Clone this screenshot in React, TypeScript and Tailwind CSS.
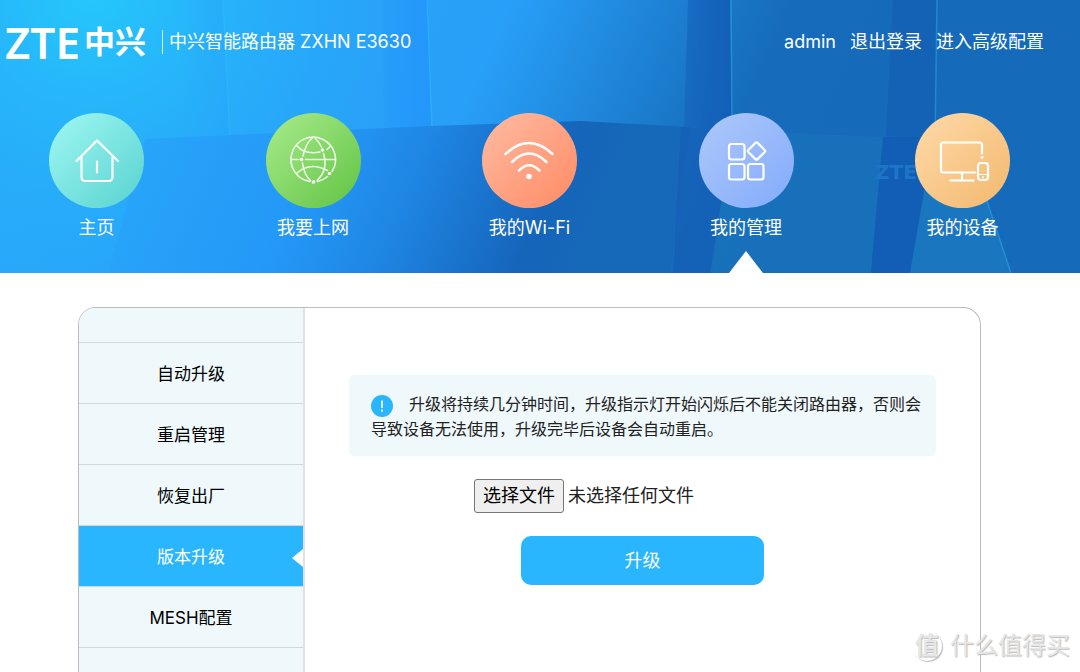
import React from 'react';

const HomeIcon = () => (
  <svg viewBox="0 0 95 95" className="size-full" fill="none" stroke="white" strokeWidth="2.200" strokeLinecap="round" strokeLinejoin="round">
    <path d="M27.500 48L48 27.500L69 48" />
    <path d="M32.500 44V64Q32.500 68 36.500 68H59.500Q63.500 68 63.500 64V44" />
    <path d="M48 48.500V59.500" />
  </svg>
);

const GlobeIcon = () => (
  <svg viewBox="0 0 95 95" className="size-full" fill="none" stroke="white" strokeOpacity="0.85" strokeWidth="1.600" strokeLinecap="round">
    <path d="M44 68.500A22.300 22.300 0 1 1 66 58.500" />
    <path d="M51.500 68.500A22.300 22.300 0 0 0 61.500 63.500" />
    <path d="M46.500 24.500Q39.500 31 37 43" />
    <path d="M36.500 50Q38 62 44.500 67.500" />
    <path d="M48.500 24.500Q53 28.500 55.500 34" />
    <path d="M57.500 40.500Q62.500 57 51 67.500" />
    <path d="M31 33Q39 42 54 39" />
    <path d="M61 36.500L64 33.500" />
    <path d="M31 60Q44 48.500 61.500 57.500" />
    <path d="M25.500 46.500H32.500M39.500 46.500H69.500" />
    <g fill="white" stroke="none">
      <circle cx="35.500" cy="46.500" r="1.800" />
      <circle cx="56.500" cy="37" r="1.800" />
      <circle cx="63.500" cy="60.500" r="1.800" />
      <circle cx="47.500" cy="69" r="1.800" />
    </g>
  </svg>
);

const WifiIcon = () => (
  <svg viewBox="0 0 95 95" className="size-full" fill="none" stroke="white" strokeWidth="2.500" strokeLinecap="round">
    <path d="M23.500 41Q47 19 70.500 41" />
    <path d="M30 49Q47 32 64.500 49" />
    <path d="M37 57.500Q47 47 57.500 57.500" />
    <circle cx="47" cy="63.500" r="2.800" fill="white" stroke="none" />
  </svg>
);

const ManageIcon = () => (
  <svg viewBox="0 0 95 95" className="size-full" fill="none" stroke="white" strokeWidth="2.200" strokeLinejoin="round">
    <rect x="30" y="31" width="15.500" height="15.500" rx="2.500" />
    <rect x="30" y="51" width="15.500" height="15.500" rx="2.500" />
    <rect x="49" y="51" width="15.500" height="15.500" rx="2.500" />
    <rect x="51" y="31.500" width="13" height="13" rx="1.500" transform="rotate(45 57.500 38)" />
  </svg>
);

const DeviceIcon = () => (
  <svg viewBox="0 0 95 95" className="size-full" fill="none" stroke="white" strokeWidth="2.200" strokeLinecap="round" strokeLinejoin="round">
    <path d="M67 40.500V32Q67 29.500 64.500 29.500H28.500Q26 29.500 26 32V57Q26 59.500 28.500 59.500H60" />
    <path d="M47 60V67M35.500 67.500H58.500" />
    <rect x="63" y="50" width="10" height="17" rx="3" />
    <path d="M63 61.500H73" strokeWidth="1.200" />
    <circle cx="68" cy="64.300" r="1" fill="white" stroke="none" />
    <circle cx="67" cy="44.500" r="1.400" fill="white" stroke="none" />
  </svg>
);

const NAV_ITEMS = [
  { label: '主页', icon: HomeIcon, color: 'from-[#9ff8f4] to-[#55d2cf]' },
  { label: '我要上网', icon: GlobeIcon, color: 'from-[#a8ec8b] to-[#60c341]' },
  { label: '我的Wi-Fi', icon: WifiIcon, color: 'from-[#fdbba3] to-[#ff8a63]' },
  { label: '我的管理', icon: ManageIcon, color: 'from-[#aec8fa] to-[#83abfb]', active: true },
  { label: '我的设备', icon: DeviceIcon, color: 'from-[#fedaa9] to-[#f3b86d]' },
];

const SIDE_ITEMS = [
  { label: '自动升级' },
  { label: '重启管理' },
  { label: '恢复出厂' },
  { label: '版本升级', active: true },
  { label: 'MESH配置' },
];

const HeaderBackdrop = () => (
  <svg viewBox="0 0 1080 273" preserveAspectRatio="none" className="absolute inset-0 size-full" aria-hidden="true">
    <defs>
      <linearGradient id="base" gradientUnits="userSpaceOnUse" x1="100" y1="0" x2="760" y2="300">
        <stop offset="0" stopColor="#28a9fa" />
        <stop offset="0.52" stopColor="#289ff8" />
        <stop offset="0.78" stopColor="#1a78c9" />
        <stop offset="0.88" stopColor="#166bba" />
        <stop offset="1" stopColor="#156aba" />
      </linearGradient>
      <radialGradient id="glow" gradientUnits="userSpaceOnUse" cx="90" cy="-10" r="320">
        <stop offset="0" stopColor="#25c8fc" />
        <stop offset="0.35" stopColor="#26bbfa" stopOpacity="0.75" />
        <stop offset="1" stopColor="#28a9fa" stopOpacity="0" />
      </radialGradient>
      <linearGradient id="lower" gradientUnits="userSpaceOnUse" x1="130" y1="120" x2="560" y2="310">
        <stop offset="0" stopColor="#28a6fa" />
        <stop offset="0.4" stopColor="#2498f7" />
        <stop offset="0.6" stopColor="#1f86e4" />
        <stop offset="0.88" stopColor="#1565ba" />
        <stop offset="1" stopColor="#1668b9" />
      </linearGradient>
      <linearGradient id="softFold" x1="0" x2="1" y1="0" y2="0">
        <stop offset="0" stopColor="#26a5fb" stopOpacity="0" />
        <stop offset="1" stopColor="#26a5fb" stopOpacity="0.5" />
      </linearGradient>
      <linearGradient id="fold" x1="0" x2="1" y1="0" y2="0">
        <stop offset="0" stopColor="#1f85fc" stopOpacity="0.1" />
        <stop offset="1" stopColor="#1f8dfc" stopOpacity="0.5" />
      </linearGradient>
      <linearGradient id="darkFold" x1="0" x2="1" y1="0" y2="0">
        <stop offset="0" stopColor="#135fb8" stopOpacity="0.5" />
        <stop offset="1" stopColor="#135fb8" />
      </linearGradient>
    </defs>
    <rect width="1080" height="273" fill="url(#base)" />
    <rect width="480" height="273" fill="url(#glow)" />
    <path d="M145 139L230 135L430 126L580 121L690 127L670 273H108Z" fill="url(#lower)" />
    <path d="M180 0H222L229 135H181Z" fill="url(#softFold)" />
    <path d="M383 0H427L431 126L383 129Z" fill="url(#fold)" />
    <path d="M688 0H730L732 130L684 127Z" fill="url(#darkFold)" />
    <path d="M681 127L732 130L712 273H673Z" fill="#145eb6" fillOpacity="0.7" />
    <path d="M732 130L883 137L871 273H710Z" fill="#1a74bd" fillOpacity="0.6" />
    <path d="M893 0H937L935 140L886 136Z" fill="#135fb5" fillOpacity="0.7" />
    <path d="M883 137H935L910 273H871Z" fill="#125bb4" fillOpacity="0.85" />
    <path d="M926 180L980 180L1011 273H910Z" fill="#1a76be" />
    <g fill="none" stroke="#2fc0f5" strokeOpacity="0.4" strokeWidth="1.500">
      <path d="M223 0L230 135" />
      <path d="M427 0L432 126" />
      <path d="M731 0L732 130" />
      <path d="M937 0L935 140" />
      <path d="M980 180L1011 273" />
    </g>
    <text x="875" y="179" className="font-['DejaVu_Sans'] text-[20px] font-bold" fill="#1c76c6">ZTE</text>
  </svg>
);

const Header = () => (
  <header className="relative h-[273px] shrink-0 bg-[#1a78c9] text-lg leading-6 text-white">
    <HeaderBackdrop />
    <div className="relative flex h-[81px] items-center justify-between pt-0.5 pr-9 pl-[5px]">
      <div className="flex items-center">
        <div className="flex w-[141px] items-center justify-between">
          <span className="font-['Noto_Sans'] text-[44px] leading-none font-semibold">ZTE</span>
          <span className="text-[31px] leading-none font-bold">中兴</span>
        </div>
        <h1 className="ml-4 border-l border-white/80 pl-1.5">中兴智能路由器 ZXHN E3630</h1>
      </div>
      <div className="flex gap-3.5">
        <span>admin</span>
        <a href="#logout">退出登录</a>
        <a href="#advanced">进入高级配置</a>
      </div>
    </div>
    <nav className="relative flex justify-between pt-8 pr-[70px] pl-[49px]">
      {NAV_ITEMS.map((item) => (
        <a key={item.label} href="#nav" className="relative flex h-40 w-[95px] flex-col items-center gap-2">
          <span className={`size-[95px] rounded-full bg-gradient-to-br ${item.color}`}>
            <item.icon />
          </span>
          <span className="whitespace-nowrap">{item.label}</span>
          {item.active && (
            <svg viewBox="0 0 34 22" className="absolute bottom-0 h-[22px] w-[34px]" fill="white">
              <path d="M17 0L34 22H0Z" />
            </svg>
          )}
        </a>
      ))}
    </nav>
  </header>
);

const Sidebar = () => (
  <aside className="w-[226px] shrink-0 rounded-tl-2xl border-r-2 border-[#dfe1e3] bg-[#eff8fb] pt-[34px]">
    {SIDE_ITEMS.map((item) => (
      <a
        key={item.label}
        href="#side"
        className={`relative flex h-[61px] items-center justify-center border-t border-[#d3d7d9] pt-1 text-[17px] ${item.active ? 'bg-[#2ab6fe] text-white' : 'text-black'}`}
      >
        {item.label}
        {item.active && (
          <svg viewBox="0 0 11 18" className="absolute right-0 h-[18px] w-[11px]" fill="white">
            <path d="M11 0V18L0 9Z" />
          </svg>
        )}
      </a>
    ))}
    <div className="border-t border-[#d3d7d9]" />
  </aside>
);

const UpgradePanel = () => (
  <main className="flex-1 px-11 pt-[67px] text-[#222]">
    <p className="rounded-md bg-[#eff8fb] pt-[17px] pr-2.5 pb-3.5 pl-[22px] text-base leading-[25px]">
      <svg viewBox="0 0 22 22" className="mr-4 inline-block size-[22px] align-middle">
        <circle cx="11" cy="11" r="11" fill="#2ab6fe" />
        <path d="M11 6V12.500M11 15V16.200" stroke="white" strokeWidth="1.600" strokeLinecap="round" />
      </svg>
      升级将持续几分钟时间，升级指示灯开始闪烁后不能关闭路由器，否则会导致设备无法使用，升级完毕后设备会自动重启。
    </p>
    <div className="mt-[23px] flex items-center gap-1 pl-[125px] text-lg">
      <label htmlFor="firmware" className="rounded-[3px] border border-[#767676] bg-[#efefef] px-2 leading-8 text-black">
        选择文件
      </label>
      <input id="firmware" type="file" className="sr-only" />
      <span>未选择任何文件</span>
    </div>
    <button type="button" className="mx-auto mt-[23px] block h-[49px] w-[243px] rounded-[10px] bg-[#2ab6fe] text-lg text-white">
      升级
    </button>
  </main>
);

const Watermark = () => (
  <div className="absolute right-2.5 bottom-2.5 flex items-center gap-2 text-[#e6e6e6] [text-shadow:1px_1px_1px_#bbb]">
    <span className="flex size-[30px] items-center justify-center rounded-full text-2xl leading-none font-bold shadow-[1px_1px_1px_#bbb]">值</span>
    <span className="text-2xl leading-8">什么值得买</span>
  </div>
);

export default function App() {
  return (
    <div className="relative flex h-screen flex-col overflow-hidden bg-white font-['Inter','Noto_Sans_CJK_SC',sans-serif]">
      <Header />
      <div className="mt-[34px] mr-[99px] ml-[78px] flex flex-1 rounded-t-[18px] border border-b-0 border-[#bbb]">
        <Sidebar />
        <UpgradePanel />
      </div>
      <Watermark />
    </div>
  );
}
